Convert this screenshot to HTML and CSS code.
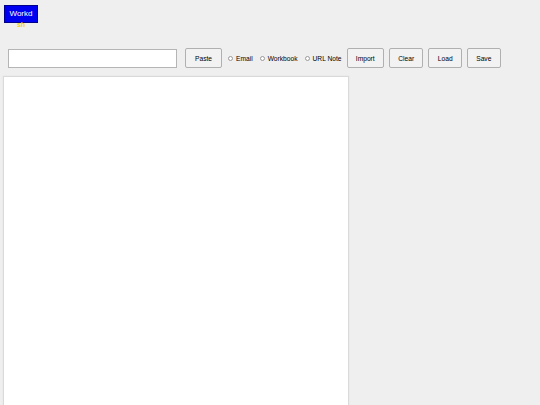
FILE: index.html
```html
<!DOCTYPE html>
<html>
<head>
<meta charset="utf-8">
<link rel="stylesheet" href="styles.css">
</head>
<body>
<header class="top">
  <div class="logo">
    <span class="logo-title">Workd</span>
    <span class="logo-sub">sh</span>
  </div>
</header>
<div class="toolbar">
  <input class="field" type="text">
  <button class="btn btn-paste">Paste</button>
  <label class="radio radio-first"><span class="dot"></span>Email</label>
  <label class="radio"><span class="dot"></span>Workbook</label>
  <label class="radio radio-last"><span class="dot"></span>URL Note</label>
  <button class="btn">Import</button>
  <button class="btn">Clear</button>
  <button class="btn">Load</button>
  <button class="btn">Save</button>
</div>
<main class="panel"></main>
</body>
</html>
```
FILE: styles.css
```css
html, body {
  margin: 0;
  height: 100%;
}
body {
  background: #efefef;
  font-family: "Liberation Sans", Arial, sans-serif;
  font-size: 6.67px;
  color: #000;
  overflow: hidden;
}
.top {
  padding: 5px 0 0 4px;
  height: 48px;
  box-sizing: border-box;
}
.logo {
  width: 34px;
  height: 18px;
  box-sizing: border-box;
  background: #0000f0;
  border: 1px solid #00008a;
  display: flex;
  flex-direction: column;
  align-items: center;
  padding-top: 1px;
}
.logo-title {
  color: #fff;
  font-size: 8px;
  line-height: 13px;
}
.logo-sub {
  color: #f0d400;
  font-size: 7px;
  line-height: 8px;
  font-weight: bold;
  margin-top: 1px;
}
.toolbar {
  display: flex;
  align-items: center;
  height: 20px;
  padding-left: 8px;
}
.field {
  width: 169px;
  height: 19px;
  box-sizing: border-box;
  margin: 0 8px 0 0;
  border: 1px solid #b5b5b5;
  background: #fff;
  padding: 0;
}
.btn {
  height: 20px;
  box-sizing: border-box;
  margin: 0 5px 0 0;
  padding: 0 8.3px;
  border: 1px solid #b0b0b0;
  border-radius: 2px;
  background: #f2f2f2;
  font-family: "Liberation Sans", Arial, sans-serif;
  font-size: 6.67px;
  color: #000;
}
.btn-paste {
  margin-right: 0;
  padding: 0 9px;
}
.radio {
  display: flex;
  align-items: center;
  margin-left: 7px;
  color: #000;
}
.radio-first {
  margin-left: 6px;
}
.radio-last {
  margin-right: 5px;
}
.dot {
  width: 5px;
  height: 5px;
  box-sizing: border-box;
  border: 1px solid #9a9a9a;
  border-radius: 50%;
  background: #fff;
  margin-right: 3px;
}
.panel {
  margin: 9px 0 0 4px;
  width: 344px;
  height: 340px;
  background: #fff;
  box-shadow: 0 0 1px 1px #dadada;
}
```
